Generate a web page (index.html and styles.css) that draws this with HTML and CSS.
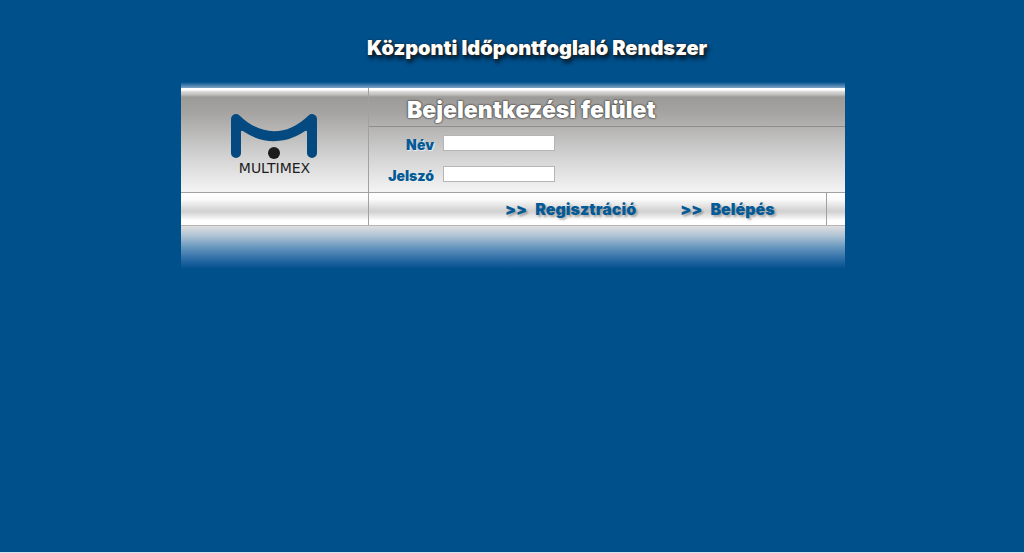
FILE: index.html
```html
<!DOCTYPE html>
<html lang="hu">
<head>
    <meta charset="UTF-8">
    <meta name="viewport" content="width=device-width, initial-scale=1.0">
    <title>Központi Időpontfoglaló Rendszer</title>
    <link rel="stylesheet" href="styles.css">
</head>
<body>

    <div class="page">
        <h1 class="page_title">Központi Időpontfoglaló Rendszer</h1>

        <form class="panel">
            <div class="panel_top">
                <div class="logo">
                    <svg width="88" height="48" viewBox="0 0 88 48" aria-hidden="true">
                        <path d="M5 40V6C29 29 57 29 81 6V40" fill="none" stroke="#04497f" stroke-width="10" stroke-linecap="round" stroke-linejoin="round"/>
                        <path d="M5 6L16 16L5 20ZM81 6L70 16L81 20Z" fill="#04497f"/>
                        <circle cx="43" cy="40" r="6" fill="#1c1c1c"/>
                    </svg>
                    <span class="logo_name">MULTIMEX</span>
                </div>
                <div class="login">
                    <h2 class="login_title">Bejelentkezési felület</h2>
                    <div class="fields">
                        <label for="nev">Név</label>
                        <input type="text" id="nev" name="nev">
                        <label for="jelszo">Jelszó</label>
                        <input type="password" id="jelszo" name="jelszo">
                    </div>
                </div>
            </div>

            <div class="panel_bar">
                <div class="bar_left"></div>
                <div class="bar_actions">
                    <a href="#" class="action"><span>&gt;&gt;</span>Regisztráció</a>
                    <button type="submit" class="action"><span>&gt;&gt;</span>Belépés</button>
                </div>
                <div class="bar_right"></div>
            </div>
        </form>
    </div>

</body>
</html>
```
FILE: styles.css
```css
:root {
    --blue: #00508c;
    --text-blue: #045a96;
    --line: #a3a09f;
}

* {
    box-sizing: border-box;
}

body {
    margin: 0;
    min-height: 100vh;
    background: var(--blue);
    border-bottom: 1px solid #d5e4ef;
    font-family: "Arial Black", Inter, sans-serif;
    font-weight: 900;
}

.page {
    max-width: 666px;
    margin: 0 auto;
    padding-left: 2px;
}

.page_title {
    margin: 0;
    padding: 35px 0 21px 186px;
    font-size: 20px;
    line-height: 26px;
    font-weight: 900;
    white-space: nowrap;
    color: white;
    text-shadow: 0 0 2px #222, 1px 1px 1px #222, 2px 4px 4px rgba(0, 0, 0, 0.7);
}

.panel::before,
.panel::after {
    content: "";
    display: block;
}

.panel::before {
    height: 6px;
    background: linear-gradient(var(--blue), #7fa5c6);
}

.panel::after {
    height: 43px;
    background: linear-gradient(#e0dfe0, #a9bfd2 25%, #6596be 50%, #2a6aa5 78%, var(--blue));
}

.panel_top {
    display: flex;
    background: linear-gradient(#fff 0, #fff 2px, #d4d3d2 4px, #c8c7c5 6px, #9d9b98 9px, #a5a3a1 24px, #b5b4b3 40px, #d2d2d2 68px, #f4f4f4 104px);
}

.logo {
    display: flex;
    flex-direction: column;
    align-items: center;
    width: 187px;
    padding-top: 25px;
}

.logo_name {
    font-family: "DejaVu Sans", sans-serif;
    font-size: 14px;
    line-height: 14px;
    font-weight: 400;
    color: #1c1c1c;
}

.login {
    flex: 1;
    border-left: 1px solid var(--line);
}

.login_title {
    margin: 0;
    padding: 9px 0 3px 38px;
    border-bottom: 1px solid #8f8d8b;
    font-size: 23px;
    line-height: 26px;
    font-weight: 900;
    color: white;
    text-shadow: 0 0 2px #444, 0 0 2px #444, 0 0 1px #555;
}

.fields {
    display: grid;
    grid-template-columns: 65px 112px;
    column-gap: 9px;
    padding: 2px 0 1px;
    align-items: center;
}

.fields label {
    font-size: 14px;
    line-height: 31px;
    text-align: right;
    color: var(--text-blue);
    text-shadow: 1px 1px 1px #eee;
}

.fields input {
    width: 112px;
    height: 16px;
    margin: 0 0 4px;
    padding: 0 2px;
    border: 1px solid #b5b5b5;
    background: white;
    font-size: 11px;
}

.panel_bar {
    display: flex;
    height: 34px;
    border-top: 1px solid var(--line);
    border-bottom: 1px solid #b9b3b3;
    background: linear-gradient(#fff, #fbfbfb 20%, #d3d3d3 54%, #d3d3d3 60%, #fff 86%, #fff);
}

.bar_left {
    width: 187px;
}

.bar_actions {
    display: flex;
    flex: 1;
    align-items: center;
    gap: 44px;
    padding-left: 136px;
    border-left: 1px solid var(--line);
}

.bar_right {
    width: 19px;
    border-left: 1px solid var(--line);
}

.action {
    display: flex;
    gap: 8px;
    padding: 0;
    border: none;
    background: none;
    font-family: inherit;
    font-size: 16px;
    line-height: 20px;
    font-weight: 900;
    color: var(--text-blue);
    text-decoration: none;
    text-shadow: 2px 2px 2px rgba(0, 0, 0, 0.25);
    cursor: pointer;
}

.action:hover {
    color: #0077cc;
}
```
